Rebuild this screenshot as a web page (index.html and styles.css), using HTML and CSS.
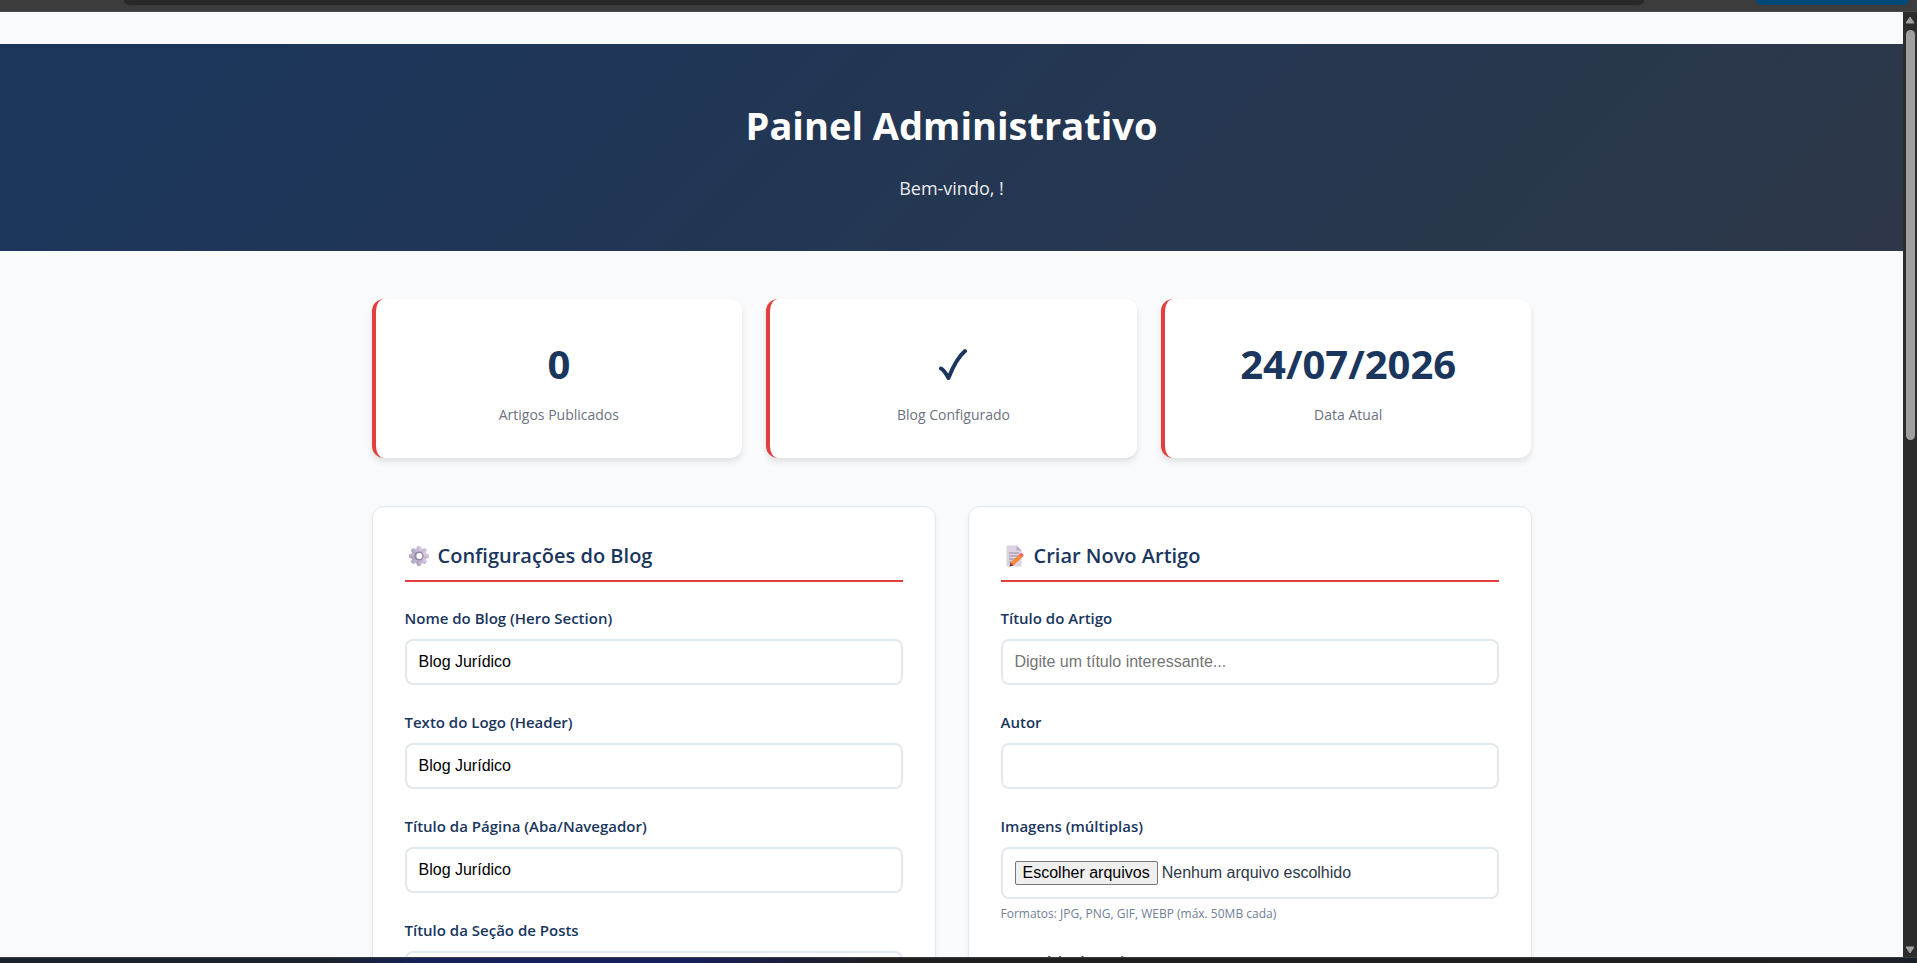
FILE: index.html
```html
<!DOCTYPE html>
<html lang="pt-BR">

<head>
  <meta charset="UTF-8">
  <meta name="viewport" content="width=device-width, initial-scale=1.0">
  <title>Painel Administrativo</title>
  <link rel="stylesheet" href="styles.css">
</head>

<body>

  <div class="browser-bar">
    <div class="address-bar"></div>
    <div class="browser-action"></div>
  </div>

  <div class="viewport">
    <main class="page">

      <header class="hero">
        <h1>Painel Administrativo</h1>
        <p>Bem-vindo, !</p>
      </header>

      <div class="container">

        <section class="stats">
          <div class="stat-card">
            <div class="stat-number">0</div>
            <div class="stat-label">Artigos Publicados</div>
          </div>
          <div class="stat-card">
            <div class="stat-number">
              <svg class="check" viewBox="0 0 28 32" role="img" aria-label="Configurado">
                <path d="M2 20.500c3 1.500 5 5 7.500 9.500C13 21 19 9 26 3" />
              </svg>
            </div>
            <div class="stat-label">Blog Configurado</div>
          </div>
          <div class="stat-card">
            <div class="stat-number">24/07/2026</div>
            <div class="stat-label">Data Atual</div>
          </div>
        </section>

        <div class="forms">

          <!-- Configurações -->
          <form class="card">
            <h2>
              <svg class="icon" viewBox="0 0 28 28" aria-hidden="true">
                <defs>
                  <linearGradient id="gearFill" x1="1" y1="0" x2="0" y2="1">
                    <stop offset="0" stop-color="#ddd3e8" />
                    <stop offset="1" stop-color="#a99bbd" />
                  </linearGradient>
                </defs>
                <g fill="url(#gearFill)">
                  <circle cx="14" cy="14" r="8" />
                  <g id="teeth">
                    <rect x="11.800" y="4" width="4.400" height="20" rx="1.500" />
                    <rect x="4" y="11.800" width="20" height="4.400" rx="1.500" />
                  </g>
                  <use href="#teeth" transform="rotate(45 14 14)" />
                </g>
                <circle cx="14" cy="14" r="4.600" fill="#9384a3" />
                <circle cx="14.300" cy="14" r="3" fill="#fff" />
              </svg>
              Configurações do Blog
            </h2>

            <div class="form-group">
              <label for="nomeBlog">Nome do Blog (Hero Section)</label>
              <input type="text" id="nomeBlog" value="Blog Jurídico">
            </div>
            <div class="form-group">
              <label for="textoLogo">Texto do Logo (Header)</label>
              <input type="text" id="textoLogo" value="Blog Jurídico">
            </div>
            <div class="form-group">
              <label for="tituloPagina">Título da Página (Aba/Navegador)</label>
              <input type="text" id="tituloPagina" value="Blog Jurídico">
            </div>
            <div class="form-group">
              <label for="tituloPosts">Título da Seção de Posts</label>
              <input type="text" id="tituloPosts">
            </div>
          </form>

          <!-- Novo artigo -->
          <form class="card">
            <h2>
              <svg class="icon" viewBox="0 0 28 28" aria-hidden="true">
                <path d="M5.500 3.500h10l5 5V24.500h-15z" fill="#dcd3e3" />
                <path d="M15.500 3.500l5 5h-5z" fill="#b5a8bf" />
                <path d="M8 11h10M8 14h9M8 17h6M8 20h4" stroke="#988ca5" stroke-width="1" fill="none" />
                <path d="M9.500 20.500l8.500-8 3 3-8.500 8-4 1z" fill="#fb8b3c" />
                <path d="M18 12.500l1.500-1.200q1-.6 2 .4l.8.9q.7 1-.3 1.900l-1 1z" fill="#fb5f55" />
                <path d="M9.500 20.500l3 3-4 1z" fill="#70405a" />
              </svg>
              Criar Novo Artigo
            </h2>

            <div class="form-group">
              <label for="titulo">Título do Artigo</label>
              <input type="text" id="titulo" placeholder="Digite um título interessante...">
            </div>
            <div class="form-group">
              <label for="autor">Autor</label>
              <input type="text" id="autor">
            </div>
            <div class="form-group">
              <label for="imagens">Imagens (múltiplas)</label>
              <div class="file-field">
                <span class="file-button">Escolher arquivos</span>
                <span>Nenhum arquivo escolhido</span>
                <input type="file" id="imagens" accept="image/*" multiple>
              </div>
              <small>Formatos: JPG, PNG, GIF, WEBP (máx. 50MB cada)</small>
            </div>
            <div class="form-group">
              <label for="conteudo">Conteúdo do Artigo</label>
              <textarea id="conteudo" rows="8"></textarea>
            </div>
          </form>

        </div>
      </div>
    </main>

    <div class="scrollbar">
      <svg class="arrow" viewBox="0 0 10 8"><path d="M5 1L9 7H1z" /></svg>
      <div class="track"><div class="thumb"></div></div>
      <svg class="arrow" viewBox="0 0 10 8"><path d="M5 7L1 1h8z" /></svg>
    </div>
  </div>

  <div class="taskbar"></div>

</body>

</html>
```
FILE: styles.css
```css
* {
  margin: 0;
  padding: 0;
  box-sizing: border-box;
}

body {
  display: flex;
  flex-direction: column;
  height: 100vh;
  overflow: hidden;
  font-family: "Segoe UI", "Open Sans", "Noto Sans", sans-serif;
  font-size: 16px;
  line-height: 26px;
  color: #2d3748;
  background-color: #f8fafc;
}

/* Browser frame */
.browser-bar {
  display: flex;
  flex: none;
  height: 12px;
  padding: 0 8px 0 124px;
  background-color: #3c3c3c;
  border-bottom: 1px solid #4a4a4d;
}

.address-bar {
  flex: 1;
  height: 5px;
  margin-right: 112px;
  background-color: #282828;
  border-radius: 0 0 10px 10px;
}

.browser-action {
  width: 153px;
  height: 5px;
  background-color: #004a77;
  border-radius: 0 0 12px 12px;
}

.viewport {
  display: flex;
  flex: 1;
  min-height: 0;
}

.page {
  flex: 1;
  overflow: hidden;
  padding-top: 32px;
}

.scrollbar {
  display: flex;
  flex-direction: column;
  align-items: center;
  width: 14px;
  padding: 4px 0 3px;
  background-color: #2c2c2c;
}

.arrow {
  width: 10px;
  height: 8px;
  fill: #9f9f9f;
  stroke: #9f9f9f;
  stroke-linejoin: round;
}

.track {
  flex: 1;
  width: 9px;
  padding: 6px 0;
}

.thumb {
  height: 45%;
  background-color: #9f9f9f;
  border-radius: 5px;
}

.taskbar {
  flex: none;
  height: 6px;
  background: linear-gradient(90deg, #1c222b 0%, #1c222b 17%, #14235a 22%, #161f5a 36%, #1f1f1f 46%, #1f1f1f 90%, #1b2028 100%);
  border-top: 1px solid #3a3d40;
}

/* Hero */
.hero {
  padding: 48px 0;
  text-align: center;
  color: #fff;
  background: linear-gradient(135deg, #1a365d 0%, #2d3748 100%);
}

.hero h1 {
  margin-bottom: 16px;
  font-size: 38px;
  line-height: 66px;
}

.hero p {
  font-size: 18px;
  line-height: 29px;
  opacity: 0.9;
}

.container {
  max-width: 1200px;
  margin: 0 auto;
  padding: 48px 20px;
}

/* Stats */
.stats {
  display: grid;
  grid-template-columns: repeat(3, 1fr);
  gap: 24px;
  margin-bottom: 48px;
}

.stat-card {
  padding: 32px;
  text-align: center;
  background-color: #fff;
  border-left: 4px solid #e53e3e;
  border-radius: 12px;
  box-shadow: 0 4px 6px rgba(0, 0, 0, 0.1);
}

.stat-number {
  display: flex;
  align-items: center;
  justify-content: center;
  margin-bottom: 6px;
  font-size: 40px;
  font-weight: 700;
  line-height: 66px;
  height: 66px;
  color: #1a365d;
}

.check {
  width: 28px;
  height: 32px;
  fill: none;
  stroke: #1a365d;
  stroke-width: 4;
  stroke-linecap: round;
  stroke-linejoin: round;
}

.stat-label {
  font-size: 14px;
  line-height: 23px;
  color: #6b7280;
}

/* Forms */
.forms {
  display: grid;
  grid-template-columns: 1fr 1fr;
  gap: 32px;
}

.card {
  padding: 32px;
  background-color: #fff;
  border: 1px solid #e2e8f0;
  border-radius: 12px;
  box-shadow: 0 4px 6px rgba(0, 0, 0, 0.05);
}

.card h2 {
  display: flex;
  align-items: center;
  gap: 5px;
  margin-bottom: 23px;
  padding-bottom: 7px;
  font-size: 20px;
  font-weight: 600;
  line-height: 34px;
  color: #1a365d;
  border-bottom: 2px solid #e53e3e;
}

.icon {
  width: 28px;
  height: 28px;
}

.form-group {
  margin-bottom: 24px;
}

.form-group label {
  display: block;
  margin-bottom: 8px;
  font-size: 15px;
  font-weight: 600;
  color: #1a365d;
}

.form-group input[type="text"],
.form-group textarea,
.file-field {
  display: block;
  width: 100%;
  padding: 12px;
  font-family: Arial, "Liberation Sans", sans-serif;
  font-size: 16px;
  line-height: 18px;
  background-color: #fff;
  border: 2px solid #e2e8f0;
  border-radius: 8px;
}

.form-group input[type="text"] {
  height: 46px;
  color: #000;
}

.form-group input::placeholder {
  color: #757575;
}

.form-group .file-field {
  display: flex;
  align-items: center;
  gap: 4px;
  position: relative;
}

.file-button {
  padding: 2px 7px;
  color: #000;
  background-color: #efefef;
  border: 1px solid #767676;
  border-radius: 2px;
}

/* o input real cobre o campo inteiro */
.file-field input {
  position: absolute;
  inset: 0;
  width: 100%;
  opacity: 0;
  cursor: pointer;
}

.form-group small {
  display: block;
  margin-top: 5px;
  font-size: 12px;
  line-height: 20px;
  color: #718096;
}
```
